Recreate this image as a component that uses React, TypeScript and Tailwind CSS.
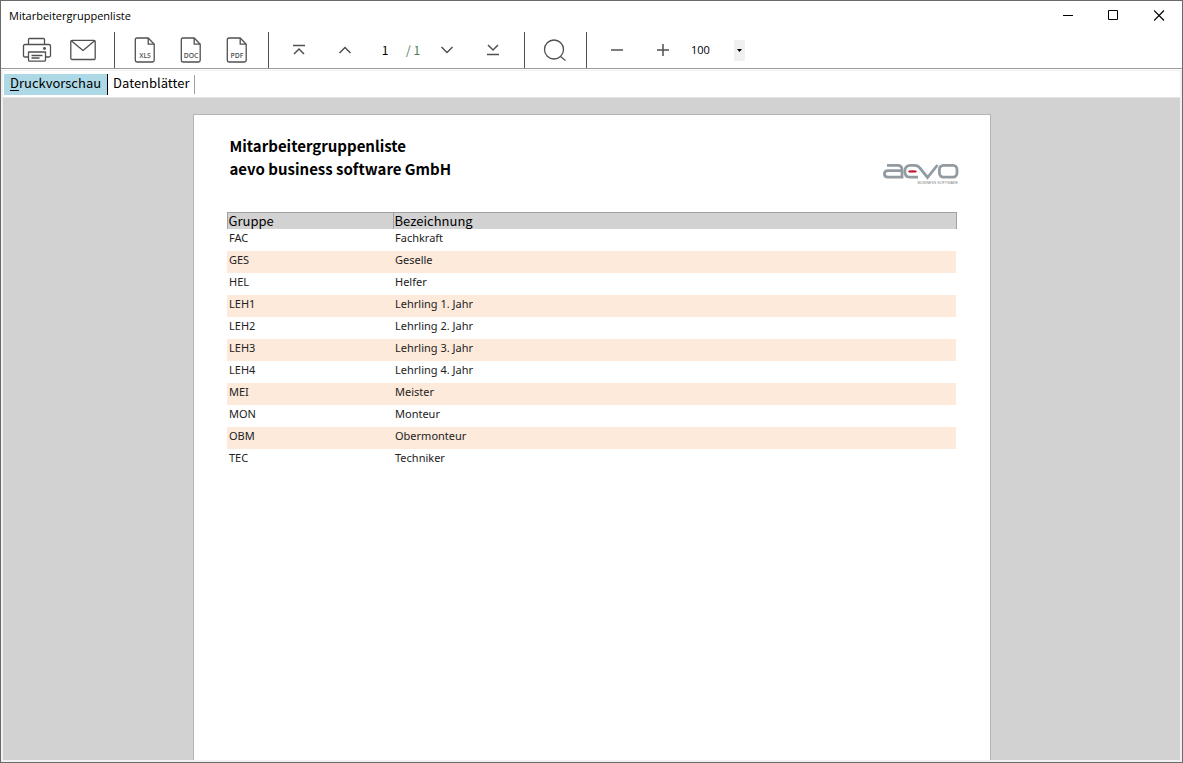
import type { ReactNode } from "react";

const groups = [
  { code: "FAC", name: "Fachkraft" },
  { code: "GES", name: "Geselle" },
  { code: "HEL", name: "Helfer" },
  { code: "LEH1", name: "Lehrling 1. Jahr" },
  { code: "LEH2", name: "Lehrling 2. Jahr" },
  { code: "LEH3", name: "Lehrling 3. Jahr" },
  { code: "LEH4", name: "Lehrling 4. Jahr" },
  { code: "MEI", name: "Meister" },
  { code: "MON", name: "Monteur" },
  { code: "OBM", name: "Obermonteur" },
  { code: "TEC", name: "Techniker" },
];

function ToolButton({ label, children }: { label: string; children: ReactNode }) {
  return (
    <button type="button" aria-label={label} className="flex h-9 w-[46px] items-center justify-center text-[#505050]">
      {children}
    </button>
  );
}

function Divider() {
  return <div className="mr-[7px] ml-2 h-9 w-px bg-[#505050]" />;
}

function PrinterIcon() {
  return (
    <svg width="30" height="26" viewBox="0 0 30 26" fill="none" stroke="currentColor" strokeWidth="1.3" strokeLinejoin="round">
      <path d="M6.500 7V2.500q0-1 1-1h14q1 0 1 1V7" />
      <path d="M6 20H3q-1.500 0-1.500-1.500V9q0-1.500 1.500-1.500h24q1.500 0 1.500 1.500v9.500q0 1.500-1.500 1.500h-3.500" />
      <path d="M6.500 15h17v8q0 1.200-1.200 1.200H7.700q-1.200 0-1.200-1.200z" />
      <path d="M9.500 18.500h11M9.500 21h8" />
      <circle cx="22.500" cy="11.500" r=".8" fill="currentColor" />
    </svg>
  );
}

function MailIcon() {
  return (
    <svg width="26" height="22" viewBox="0 0 26 22" fill="none" stroke="currentColor" strokeWidth="1.300" strokeLinejoin="round">
      <rect x=".8" y="1.300" width="24.400" height="19.200" rx="1.200" />
      <path d="M1.300 1.800 13 11.500 24.700 1.800" />
    </svg>
  );
}

function FileIcon({ type }: { type: string }) {
  return (
    <svg width="22" height="26" viewBox="0 0 22 26" fill="none" stroke="currentColor" strokeWidth="1.300" strokeLinejoin="round">
      <path d="M14.200 1H3Q1.300 1 1.300 2.700v20.600Q1.300 25 3 25h15.500q1.700 0 1.700-1.700V7.200z" />
      <path d="M14.200 1v6.200h6" />
      <text x="11" y="20.800" textAnchor="middle" fontSize="6.800" fontWeight="600" fill="currentColor" stroke="none" fontFamily="'Open Sans', sans-serif">
        {type}
      </text>
    </svg>
  );
}

function Glyph({ d }: { d: string }) {
  return (
    <svg width="14" height="14" viewBox="0 0 14 14" fill="none" stroke="currentColor" strokeWidth="1.500">
      <path d={d} />
    </svg>
  );
}

function Logo() {
  return (
    <svg width="78" height="24" viewBox="0 0 78 24" role="img" aria-label="aevo business software">
      <g fill="none" stroke="#919ba1" strokeWidth="2.800">
        <path d="M5 2.400H15.500Q20 2.400 20 6.500V14.100H6Q2.400 14.100 2.400 11 2.400 7.600 6 7.600H19" />
        <path d="M36 14.100H27.500Q22.800 14.100 22.800 8.300 22.800 2.400 28.500 2.400H32Q36 2.400 37.800 5L45.500 14.500 55.500 2" />
        <rect x="57.400" y="2.400" width="17.600" height="11.700" rx="4" />
      </g>
      <ellipse cx="30.500" cy="8.400" rx="4.300" ry="1.200" fill="#c4122f" />
      <text x="76" y="21.200" textAnchor="end" fontSize="3.700" fill="#858585" fontFamily="'Liberation Sans', sans-serif">
        BUSINESS SOFTWARE
      </text>
    </svg>
  );
}

export default function App() {
  return (
    <div className="flex h-screen flex-col border border-[#6a6a6a] bg-white font-['Noto_Sans_CJK_SC','Noto_Sans',sans-serif] text-black">
      <header className="flex h-[31px] shrink-0 items-center justify-between pl-2">
        <h1 className="pb-px font-['Open_Sans',sans-serif] text-[11px] leading-4">Mitarbeitergruppenliste</h1>
        <div className="flex pb-0.5">
          <button type="button" aria-label="Minimieren" className="flex h-7 w-[46px] items-center justify-center">
            <svg width="11" height="11" viewBox="0 0 11 11" stroke="currentColor"><path d="M1 5.500h10" /></svg>
          </button>
          <button type="button" aria-label="Maximieren" className="flex h-7 w-[46px] items-center justify-center">
            <svg width="11" height="11" viewBox="0 0 11 11" fill="none" stroke="currentColor"><path d="M.5.5h9v9h-9z" /></svg>
          </button>
          <button type="button" aria-label="Schließen" className="flex h-7 w-[46px] items-center justify-center">
            <svg width="11" height="11" viewBox="0 0 11 11" stroke="currentColor" strokeWidth="1.200"><path d="M0 .5l10 10M10 .5l-10 10" /></svg>
          </button>
        </div>
      </header>

      <div className="flex h-[37px] shrink-0 items-center border-b border-[#9a9c99] pl-[13px]">
        <ToolButton label="Drucken"><PrinterIcon /></ToolButton>
        <ToolButton label="E-Mail"><MailIcon /></ToolButton>
        <Divider />
        <ToolButton label="XLS"><FileIcon type="XLS" /></ToolButton>
        <ToolButton label="DOC"><FileIcon type="DOC" /></ToolButton>
        <ToolButton label="PDF"><FileIcon type="PDF" /></ToolButton>
        <Divider />
        <ToolButton label="Erste Seite"><Glyph d="M1 2.500h12M2 11l5-5 5 5" /></ToolButton>
        <ToolButton label="Vorherige Seite"><Glyph d="M1.500 10 7 4.500l5.500 5.500" /></ToolButton>
        <div className="flex w-14 items-center text-xs leading-4">
          <input aria-label="Seite" defaultValue="1" className="w-[34px] text-center outline-none" />
          <span className="pl-1 text-[#4c7a52]">/ 1</span>
        </div>
        <ToolButton label="Nächste Seite"><Glyph d="M1.500 4 7 9.500 12.500 4" /></ToolButton>
        <ToolButton label="Letzte Seite"><Glyph d="M2 2l5 5 5-5M1 11.500h12" /></ToolButton>
        <Divider />
        <ToolButton label="Suchen">
          <svg width="24" height="24" viewBox="0 0 24 24" fill="none" stroke="currentColor" strokeWidth="1.300">
            <circle cx="11" cy="11.500" r="9.500" />
            <path d="M17.500 18.500l5 4" />
          </svg>
        </ToolButton>
        <Divider />
        <ToolButton label="Verkleinern"><Glyph d="M1 7h12" /></ToolButton>
        <ToolButton label="Vergrößern"><Glyph d="M1 7h12M7 1v12" /></ToolButton>
        <input aria-label="Zoom" defaultValue="100" className="w-12 pl-[5px] font-['Open_Sans',sans-serif] text-[11px] leading-4 outline-none" />
        <button type="button" aria-label="Zoom wählen" className="flex h-[21px] w-[11px] items-center justify-center bg-[#f0f0f0]">
          <svg width="5" height="3" viewBox="0 0 5 3"><path d="M0 0h5L2.500 3z" /></svg>
        </button>
      </div>

      <div className="mt-px flex min-h-0 flex-1 flex-col border-2 border-t border-[#f0f0f0]">
        <nav role="tablist" className="flex h-[26px] shrink-0 items-center pl-px text-[13px] leading-5">
          <button type="button" role="tab" aria-selected="true" className="flex h-[21px] items-center border-r border-black bg-[#add8e6] px-1.5 pb-0.5">
            <span className="underline underline-offset-2">D</span>ruckvorschau
          </button>
          <button type="button" role="tab" aria-selected="false" className="flex h-[19px] items-center border-r border-[#a0a0a0] px-[5px] pb-0.5">
            Datenblätter
          </button>
        </nav>

        <main className="min-h-0 flex-1 overflow-hidden border-t border-[#e4e4e4] bg-[#d2d2d2] pt-4">
          <article className="mx-auto min-h-full w-full max-w-[798px] border border-b-0 border-[#b4b4b4] bg-white px-[33px]">
            <div className="flex items-start justify-between pt-[19px] pl-[3px]">
              <h2 className="text-[15px] leading-[23px] font-bold">
                Mitarbeitergruppenliste
                <br />
                aevo business software GmbH
              </h2>
              <div className="-mr-[3px] pt-[29px]"><Logo /></div>
            </div>

            <table className="mt-[25px] w-full border-collapse text-left">
              <thead>
                <tr className="bg-[#d2d2d2] text-[13px] leading-4">
                  <th className="w-[166px] border border-b-0 border-[#a0a0a0] p-0 pl-px font-normal">Gruppe</th>
                  <th className="border border-b-0 border-[#a0a0a0] p-0 pl-px font-normal">Bezeichnung</th>
                </tr>
              </thead>
              <tbody>
                {groups.map((group) => (
                  <tr key={group.code} className="h-[22px] align-top font-['Noto_Sans',sans-serif] text-[11px] leading-[17px] text-[#222] even:bg-[#fdeadb]">
                    <td className="p-0 pl-0.5">{group.code}</td>
                    <td className="p-0 pl-0.5">{group.name}</td>
                  </tr>
                ))}
              </tbody>
            </table>
          </article>
        </main>
      </div>
    </div>
  );
}
